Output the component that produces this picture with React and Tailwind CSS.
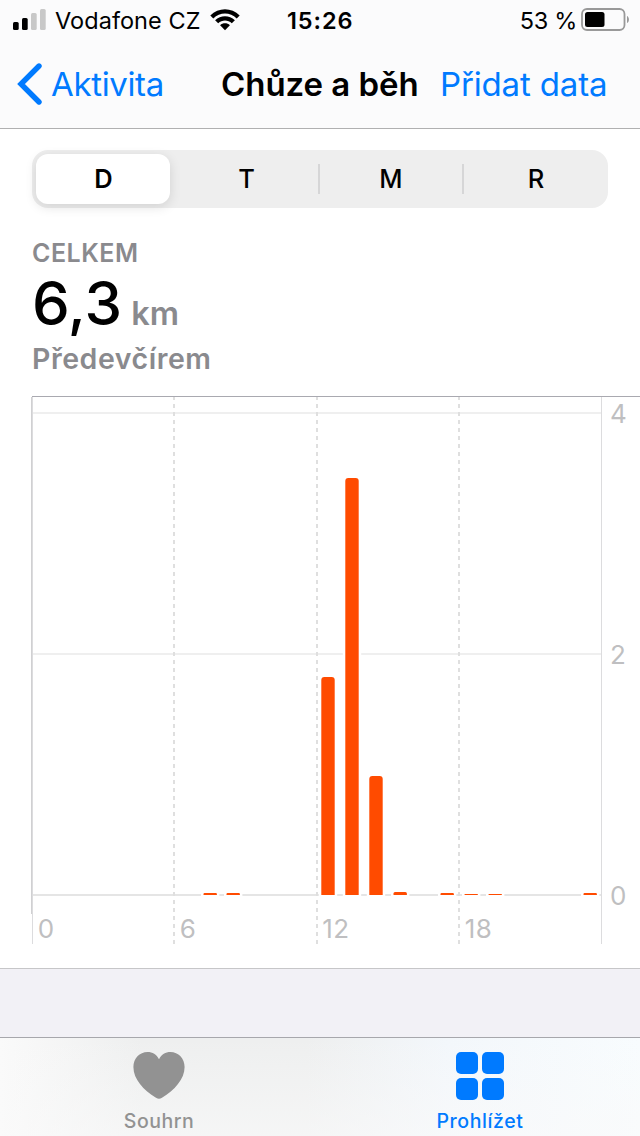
const bars = [
  { x: 203.5, top: 497 },
  { x: 226.5, top: 497 },
  { x: 321.3, top: 281 },
  { x: 345.3, top: 82 },
  { x: 369.3, top: 380 },
  { x: 393.5, top: 496 },
  { x: 440.5, top: 497 },
  { x: 464.5, top: 498 },
  { x: 488.5, top: 498 },
  { x: 583.5, top: 497 },
];

const hours = [
  { x: 37.8, label: '0' },
  { x: 179.8, label: '6' },
  { x: 322.3, label: '12' },
  { x: 464.8, label: '18' },
];

const levels = [
  { y: 27, label: '4' },
  { y: 268, label: '2' },
  { y: 509, label: '0' },
];

function StatusBar() {
  return (
    <div className="flex h-[41px] items-center pl-[13px] pr-[11px] leading-[41px]">
      <svg width="33" height="22" viewBox="0 0 33 22" className="mt-[-2px] shrink-0">
        <rect x="0" y="13" width="5.7" height="8" rx="1.5" />
        <rect x="9" y="9" width="5.7" height="12" rx="1.5" />
        <rect x="18" y="4" width="5.7" height="17" rx="1.5" fill="#c8c8c8" />
        <rect x="27" y="0" width="5.7" height="21" rx="1.5" fill="#c8c8c8" />
      </svg>
      <span className="ml-[9px] w-[155px] text-[23.5px] tracking-[0.05px]">Vodafone CZ</span>
      <svg width="30" height="22" viewBox="0 0 30 22" className="mt-[-1px] shrink-0">
        <path d="M0.3 6.4C8.5-1.9 21.5-1.9 29.7 6.4L26.7 9.4C20.2 3 9.8 3 3.3 9.4Z" />
        <path d="M5.1 11.2C10.6 5.8 19.4 5.8 24.9 11.2L21.8 14.3C18 10.7 12 10.7 8.2 14.3Z" />
        <path d="M10.1 16.2C12.8 13.6 17.2 13.6 19.9 16.2L15 21.3Z" />
      </svg>
      <span className="ml-[47px] w-[120px] text-[23.5px] font-semibold tracking-[0.9px]">15:26</span>
      <span className="ml-auto text-[23.5px] tracking-[-0.3px]">53 %</span>
      <svg width="49" height="24" viewBox="0 0 49 24" className="ml-[4px] mr-[-1px] mt-[-1px] shrink-0">
        <rect x="1" y="1" width="42.5" height="21" rx="5" fill="none" stroke="#999" strokeWidth="1.8" />
        <rect x="4" y="4" width="19.5" height="15" rx="2.5" />
        <path d="M46 8C48.6 9 48.6 14 46 15Z" fill="#999" />
      </svg>
    </div>
  );
}

function Header() {
  return (
    <header className="h-[129px] shrink-0 border-b border-[#b0b0b1] bg-[#fbfbfc]">
      <StatusBar />
      <div className="flex h-[86px] items-center whitespace-nowrap pl-[17px] text-[33px] leading-[86px]">
        <svg width="26" height="42" viewBox="0 0 26 42" className="shrink-0">
          <path d="M22 3L4 21L22 39" fill="none" stroke="#007aff" strokeWidth="5.4" strokeLinecap="round" strokeLinejoin="miter" />
        </svg>
        <span className="ml-[8px] w-[170px] tracking-[-0.35px] text-[#007aff]">Aktivita</span>
        <h1 className="w-[219px] font-semibold tracking-[-0.05px]">Chůze a běh</h1>
        <span className="tracking-[-0.15px] text-[#007aff]">Přidat data</span>
      </div>
    </header>
  );
}

function Segments() {
  return (
    <div className="mx-8 mt-[21px] flex h-[58px] shrink-0 items-center rounded-[16px] bg-[#eeeeee] text-center text-[25.5px] leading-[58px]">
      <div className="ml-1 h-[50px] w-[134px] rounded-[12px] bg-white pl-px font-semibold leading-[50px] shadow-[0_3px_12px_rgba(0,0,0,0.12)]">D</div>
      <div className="ml-[5px] w-[143px] font-medium">T</div>
      <div className="h-[30px] w-[2px] bg-[#d6d6d7]" />
      <div className="w-[142px] font-medium">M</div>
      <div className="h-[30px] w-[2px] bg-[#d6d6d7]" />
      <div className="w-[144px] font-medium">R</div>
    </div>
  );
}

function Chart() {
  return (
    <svg width="640" height="548" viewBox="0 0 640 548" className="block shrink-0">
      <path d="M32 17H601M32 258H601" stroke="#efefef" strokeWidth="2" />
      <path d="M32 499H601" stroke="#e5e5e5" strokeWidth="2" />
      <path d="M174 1V548M317 1V548M459 1V548" stroke="#dfdfdf" strokeWidth="2" strokeDasharray="4 4" strokeDashoffset="1" />
      <path d="M32.5 0V548M601.5 0V548" stroke="#dcdcde" />
      <path d="M31.5 1V518" stroke="#d0d0d2" />
      <path d="M32 0.5H640" stroke="#a9a9b0" />
      {bars.map((b) => (
        <rect key={`gap-${b.x}`} x={b.x - 2.5} y={b.top - 2} width="18.4" height={499 - b.top + 3} fill="#fff" />
      ))}
      {bars.map((b) => {
        const r = Math.min(3, (499 - b.top) / 2);
        return (
          <path
            key={b.x}
            d={`M${b.x} 499V${b.top + r}q0-${r} ${r}-${r}h${13.4 - 2 * r}q${r} 0 ${r} ${r}V499Z`}
            fill="#ff4b00"
          />
        );
      })}
      <g fill="#bfbfc1" fontSize="26" letterSpacing="0.3">
        {hours.map((h) => (
          <text key={h.label} x={h.x} y="542">{h.label}</text>
        ))}
        {levels.map((l) => (
          <text key={l.label} x="610" y={l.y}>{l.label}</text>
        ))}
      </g>
    </svg>
  );
}

function TabBar() {
  return (
    <nav className="flex h-[99px] shrink-0 border-t border-[#a7a7ac] bg-[linear-gradient(180deg,rgba(250,250,250,0)_0%,rgba(250,250,250,0.6)_100%),linear-gradient(90deg,#fafafa_0%,#eeefef_22%,#eeefef_48%,#f3f7fb_70%,#f8fcfe_100%)] text-[19.5px] font-medium leading-[26px]">
      <div className="flex w-[318px] flex-col items-center pt-[13px] text-[#929292]">
        <svg width="52" height="49" viewBox="0 0 52 49">
          <path d="M26 8.2C23.5 3.5 19.5 1 14.6 1C6.5 1 0.4 7.4 0.4 16C0.4 28.2 10.5 39.2 23 46.7C25.2 48 26.8 48 29 46.7C41.5 39.2 51.6 28.2 51.6 16C51.6 7.4 45.5 1 37.4 1C32.5 1 28.5 3.5 26 8.2Z" fill="#929292" />
        </svg>
        <span className="mt-[8px] tracking-[0.5px]">Souhrn</span>
      </div>
      <div className="flex w-[322px] flex-col items-center pl-[2px] pt-[14px] text-[#007aff]">
        <div className="grid grid-cols-2 gap-[4px]">
          <i className="size-[22px] rounded-[5px] bg-[#007aff]" />
          <i className="size-[22px] rounded-[5px] bg-[#007aff]" />
          <i className="size-[22px] rounded-[5px] bg-[#007aff]" />
          <i className="size-[22px] rounded-[5px] bg-[#007aff]" />
        </div>
        <span className="mt-[8px] tracking-[0.6px]">Prohlížet</span>
      </div>
    </nav>
  );
}

export default function App() {
  return (
    <div className="flex h-[1136px] w-[640px] flex-col overflow-hidden bg-white font-['Inter',sans-serif] text-black">
      <Header />
      <main className="flex h-[840px] shrink-0 flex-col border-b border-[#c6c6c8]">
        <Segments />
        <section className="flex h-[188px] shrink-0 flex-col whitespace-nowrap pl-8 pt-[30px] font-semibold text-[#8a8a8e]">
          <div className="h-[30px] text-[25px] leading-[30px] tracking-[0.5px]">CELKEM</div>
          <div className="flex h-[71px] items-baseline leading-[71px]">
            <span className="text-[60px] font-medium text-black">6,3</span>
            <span className="ml-[9px] text-[32.5px]">km</span>
          </div>
          <div className="h-[40px] text-[28.5px] leading-[40px] tracking-[0.55px]">Předevčírem</div>
        </section>
        <Chart />
      </main>
      <div className="h-[68px] shrink-0 bg-[#f2f1f6]" />
      <TabBar />
    </div>
  );
}
